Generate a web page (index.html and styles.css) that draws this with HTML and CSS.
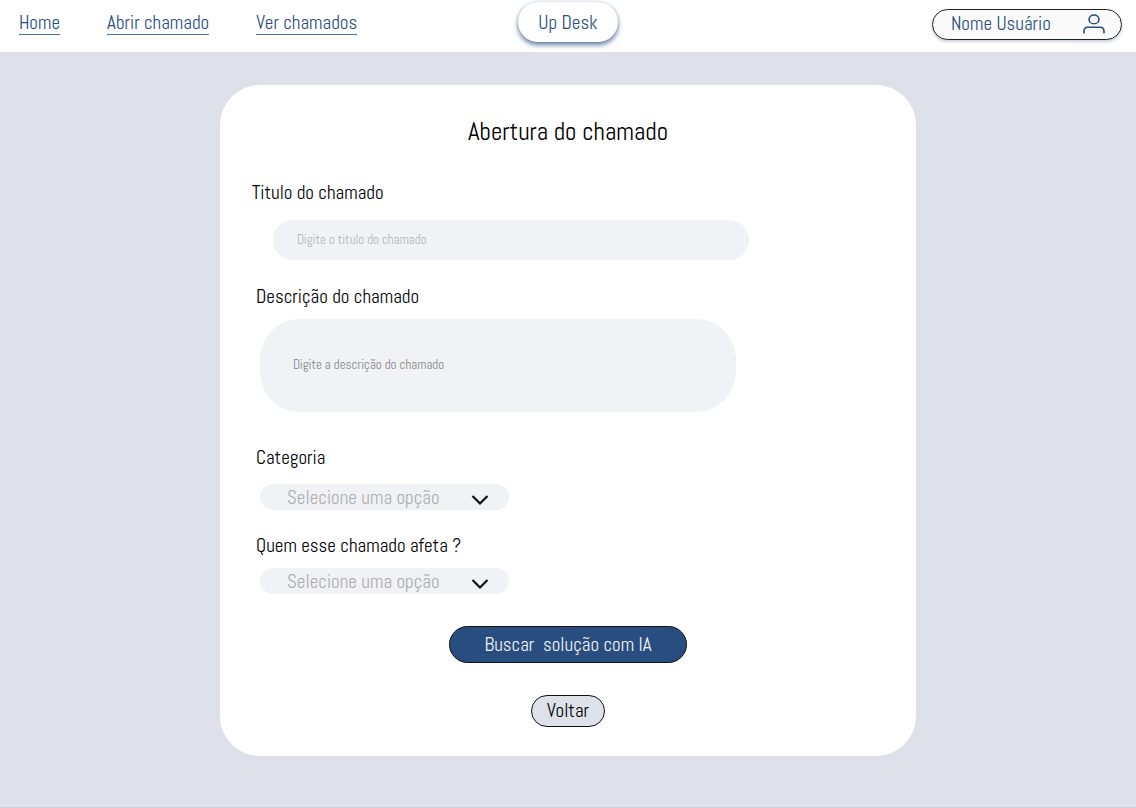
FILE: index.html
```html
<!DOCTYPE html>
<html lang="pt-BR">
<head>
<meta charset="utf-8">
<meta name="viewport" content="width=device-width, initial-scale=1">
<title>Up Desk</title>
<link rel="stylesheet" href="styles.css">
</head>
<body>
<header class="topbar">
  <nav class="nav">
    <a class="nav-link" href="#home">Home</a>
    <a class="nav-link" href="#abrir">Abrir chamado</a>
    <a class="nav-link" href="#ver">Ver chamados</a>
  </nav>
  <a class="brand" href="#home">Up Desk</a>
  <button class="user" type="button">
    <span>Nome Usuário</span>
    <svg class="user-icon" viewBox="0 0 22 20" aria-hidden="true"><ellipse cx="11" cy="5.4" rx="4.9" ry="4.4"/><path d="M1 19.500V17.200Q1 13.200 5 13.200H17Q21 13.200 21 17.200V19.500"/></svg>
  </button>
</header>
<main class="page">
  <form class="card">
    <h1 class="title">Abertura do chamado</h1>
    <label class="label label-first" for="titulo">Titulo do chamado</label>
    <input class="field field-title" id="titulo" type="text" placeholder="Digite o titulo do chamado">
    <label class="label" for="descricao">Descrição do chamado</label>
    <textarea class="field field-text" id="descricao" rows="1" placeholder="Digite a descrição do chamado"></textarea>
    <label class="label" for="categoria">Categoria</label>
    <div class="picker picker-category">
      <select class="select" id="categoria"><option>Selecione uma opção</option></select>
      <svg class="chevron" viewBox="0 0 18 12" aria-hidden="true"><path d="M1.500 2L9 9.500L16.500 2"/></svg>
    </div>
    <label class="label" for="afeta">Quem esse chamado afeta ?</label>
    <div class="picker">
      <select class="select" id="afeta"><option>Selecione uma opção</option></select>
      <svg class="chevron" viewBox="0 0 18 12" aria-hidden="true"><path d="M1.500 2L9 9.500L16.500 2"/></svg>
    </div>
    <button class="submit" type="submit">Buscar  solução com IA</button>
    <button class="back" type="button">Voltar</button>
  </form>
</main>
</body>
</html>
```
FILE: styles.css
```css
*, *::before, *::after { box-sizing: border-box; }

body {
  margin: 0;
  min-height: 100vh;
  display: flex;
  flex-direction: column;
  background: #dee1e9;
  border-bottom: 1px solid #d0d1d9;
  color: #000;
  font-family: Abel, "Roboto Condensed", "Liberation Sans Narrow", Roboto, sans-serif;
  font-size: 19px;
  line-height: 24px;
}

button, input, select, textarea { font: inherit; margin: 0; }

.topbar {
  display: grid;
  grid-template-columns: 1fr auto 1fr;
  align-items: start;
  height: 52px;
  padding: 2px 14px 0;
  background: #fff;
  color: #2a4d80;
}

.nav { display: flex; gap: 47px; padding: 9px 0 0 5px; }

.nav-link {
  height: 24px;
  color: inherit;
  text-decoration: none;
  border-bottom: 1px solid #4a6fa5;
}

.brand {
  padding: 9px 20px 7px;
  border-radius: 20px;
  background: #fff;
  box-shadow: 0 3px 5px #2a4d80b0, 0 0 3px #2a4d8040;
  color: inherit;
  text-decoration: none;
}

.user {
  justify-self: end;
  display: flex;
  align-items: center;
  justify-content: space-between;
  width: 190px;
  height: 31px;
  margin-top: 7px;
  padding: 0 16px 2px 18px;
  border: 1px solid #222;
  border-radius: 16px;
  background: #fafafa;
  box-shadow: 0 2px 3px #2a4d8040;
  color: inherit;
}

.user-icon {
  width: 22px;
  height: 20px;
  fill: none;
  stroke: #2a4d80;
  stroke-width: 1.6;
}

.page { padding: 33px 24px 48px; }

.card {
  display: flex;
  flex-direction: column;
  align-items: flex-start;
  max-width: 696px;
  margin: 0 auto;
  padding: 31px 32px 29px;
  border-radius: 40px;
  background: #fff;
}

.title {
  align-self: center;
  margin: 0 0 32px;
  font-size: 25px;
  font-weight: 400;
  line-height: 32px;
}

.label { margin-left: 4px; line-height: 26px; }
.label-first { margin-left: 0; }

.field {
  width: 100%;
  max-width: 476px;
  border: 0;
  background: #f1f2f6;
  font-size: 13px;
  line-height: 20px;
  color: #333;
}

.field-title {
  height: 40px;
  margin: 14px 0 24px 21px;
  padding: 0 24px 2px;
  border-radius: 20px;
}

.field-text {
  height: 93px;
  margin: 9px 0 33px 8px;
  padding: 36px 33px;
  border-radius: 40px;
  resize: none;
}

.field::placeholder { color: #b5b5b5; opacity: 1; }
.field-text::placeholder { color: #858585; }

.picker {
  position: relative;
  width: 249px;
  margin: 9px 0 32px 8px;
}

.picker-category { margin: 13px 0 23px 8px; }

.select {
  display: block;
  width: 100%;
  height: 26px;
  padding: 2px 50px 0 27px;
  border: 0;
  border-radius: 13px;
  appearance: none;
  background: #f1f2f6;
  color: #adadad;
}

.chevron {
  position: absolute;
  top: 10px;
  right: 20px;
  width: 18px;
  height: 12px;
  fill: none;
  stroke: #111;
  stroke-width: 2.2;
  pointer-events: none;
}

.submit, .back {
  align-self: center;
  border: 1px solid #111;
  white-space: pre;
}

.submit {
  width: 238px;
  height: 37px;
  margin-bottom: 32px;
  border-radius: 19px;
  background: #2a4d80;
  color: #f1f2f6;
}

.back {
  height: 32px;
  padding: 0 15px;
  border-radius: 16px;
  background: #dee1e9;
  color: #000;
}
```
